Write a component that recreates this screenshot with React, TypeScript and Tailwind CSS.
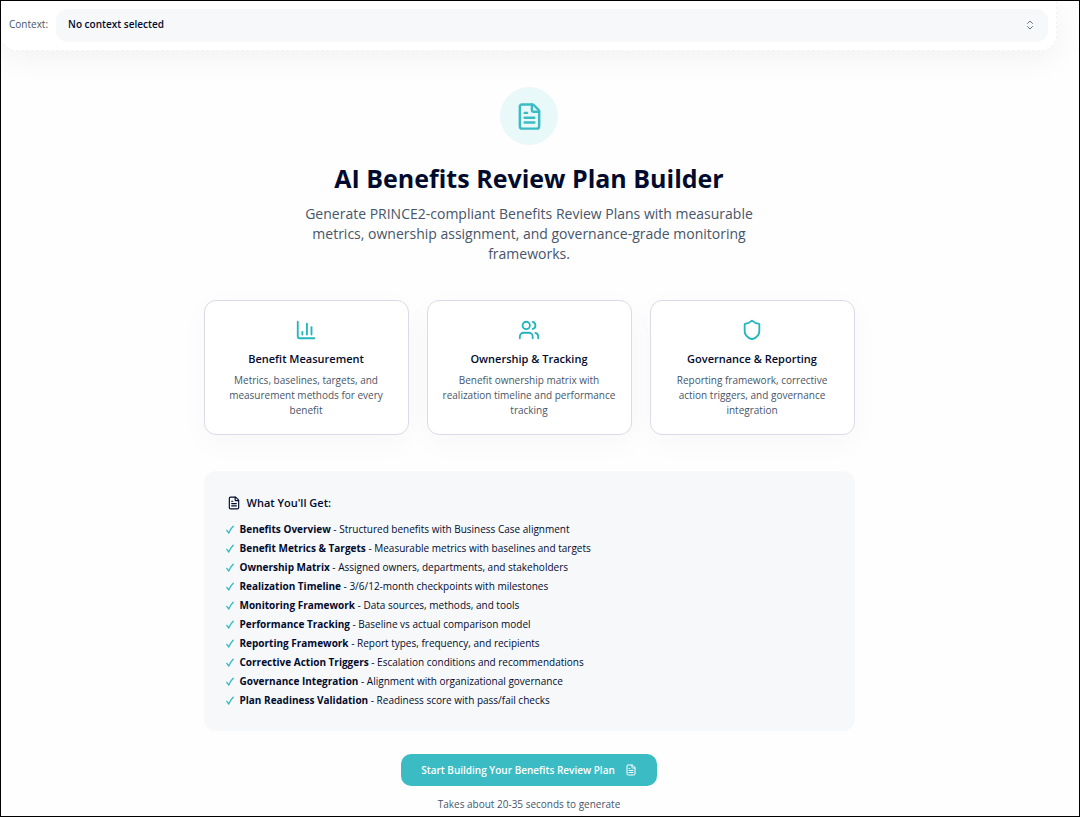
import { ChartColumn, ChevronsUpDown, FileText, Shield, Users } from "lucide-react";
import type { LucideIcon } from "lucide-react";

type Feature = {
  icon: LucideIcon
  title: string
  description: string
}

const features: Feature[] = [
  {
    icon: ChartColumn,
    title: "Benefit Measurement",
    description: "Metrics, baselines, targets, and measurement methods for every benefit",
  },
  {
    icon: Users,
    title: "Ownership & Tracking",
    description: "Benefit ownership matrix with realization timeline and performance tracking",
  },
  {
    icon: Shield,
    title: "Governance & Reporting",
    description: "Reporting framework, corrective action triggers, and governance integration",
  },
];

const deliverables = [
  { name: "Benefits Overview", detail: "Structured benefits with Business Case alignment" },
  { name: "Benefit Metrics & Targets", detail: "Measurable metrics with baselines and targets" },
  { name: "Ownership Matrix", detail: "Assigned owners, departments, and stakeholders" },
  { name: "Realization Timeline", detail: "3/6/12-month checkpoints with milestones" },
  { name: "Monitoring Framework", detail: "Data sources, methods, and tools" },
  { name: "Performance Tracking", detail: "Baseline vs actual comparison model" },
  { name: "Reporting Framework", detail: "Report types, frequency, and recipients" },
  { name: "Corrective Action Triggers", detail: "Escalation conditions and recommendations" },
  { name: "Governance Integration", detail: "Alignment with organizational governance" },
  { name: "Plan Readiness Validation", detail: "Readiness score with pass/fail checks" },
];

function ContextBar() {
  return (
    <div className="flex items-center gap-2 rounded-b-2xl border-b border-r border-dashed border-gray-100 bg-white py-2 pl-2 pr-2 shadow-[0_8px_30px_rgba(0,0,0,0.05)]">
      <label htmlFor="context" className="pb-0.5 text-[10px] text-[#475569]">Context:</label>
      <div className="relative flex-1">
        <select
          id="context"
          className="block h-[33px] w-full appearance-none rounded-xl bg-[#f6f8fa] px-3 pb-0.5 text-[10px] font-semibold text-[#020b2d]"
        >
          <option>No context selected</option>
        </select>
        <ChevronsUpDown className="pointer-events-none absolute right-3 top-2.5 size-3 text-gray-500" />
      </div>
    </div>
  )
}

function FeatureCard({ icon: Icon, title, description }: Feature) {
  return (
    <div className="flex flex-col items-center rounded-xl border border-[#d9dce6] bg-white px-3 pb-4 pt-[18px] text-center shadow-[0_8px_30px_rgba(0,0,0,0.03)]">
      <Icon className="size-[22px] text-[#23b5bd]" />
      <h3 className="mt-2 text-[11px] font-semibold leading-5 text-[#020b2d]">{title}</h3>
      <p className="mt-1 text-[10px] leading-[15px] text-[#475569]">{description}</p>
    </div>
  )
}

function CheckMark() {
  return (
    <svg viewBox="0 0 8 10" className="h-2.5 w-2 shrink-0" aria-hidden="true">
      <path d="M0.8 5.4L2.8 8C3.8 5.4 5.2 3.2 7.2 1.2" fill="none" stroke="#3bbcc4" strokeWidth="1.4" strokeLinecap="round" strokeLinejoin="round" />
    </svg>
  )
}

function App() {
  return (
    <div className="min-h-screen border border-black bg-[#fefefe] pr-[22px] font-['Open_Sans','Noto_Sans',sans-serif]">
      <ContextBar />
      <main className="mx-auto flex max-w-[651px] flex-col items-center pt-9">
        <div className="flex size-[58px] items-center justify-center rounded-full bg-[#e9f8f9]">
          <FileText className="size-[29px] text-[#3bbcc4]" />
        </div>
        <h1 className="mt-[15px] text-center text-[25px] font-bold leading-9 text-[#020b2d]">AI Benefits Review Plan Builder</h1>
        <p className="mt-2 max-w-[470px] text-center text-[14px] leading-5 text-[#475569]">
          Generate PRINCE2-compliant Benefits Review Plans with measurable metrics, ownership assignment, and governance-grade monitoring frameworks.
        </p>

        <div className="mt-9 grid w-full grid-cols-3 gap-[18px]">
          {features.map((feature) => (
            <FeatureCard key={feature.title} {...feature} />
          ))}
        </div>

        <section className="mt-9 w-full rounded-xl bg-[#f6f8fa] px-[22px] pb-[21px] pt-[22px]">
          <h2 className="flex items-center gap-1.5 text-[11px] font-semibold leading-5 text-[#020b2d]">
            <FileText className="ml-px size-3.5" />
            What You'll Get:
          </h2>
          <ul className="mt-[7px] text-[10px] leading-[19px] text-[#020b2d]">
            {deliverables.map(({ name, detail }) => (
              <li key={name} className="flex items-center gap-1.5">
                <CheckMark />
                <span><strong className="font-bold">{name}</strong> - {detail}</span>
              </li>
            ))}
          </ul>
        </section>

        <button
          type="button"
          className="mt-[23px] flex h-8 items-center gap-2.5 rounded-[10px] bg-[#3bbcc4] px-5 text-[10px] font-semibold text-white"
        >
          Start Building Your Benefits Review Plan
          <FileText className="size-3" />
        </button>
        <p className="mt-2.5 text-[10px] leading-4 text-[#475569]">Takes about 20-35 seconds to generate</p>
      </main>
    </div>
  )
}

export default App
